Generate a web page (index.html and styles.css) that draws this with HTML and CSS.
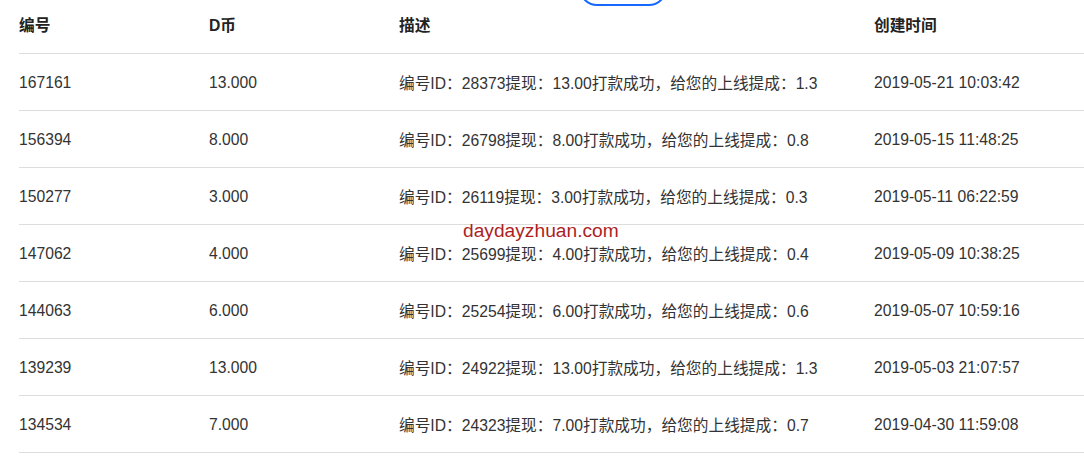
FILE: index.html
```html
<!DOCTYPE html>
<html lang="zh-CN">
<head>
    <meta charset="UTF-8">
    <title>D币记录</title>
    <link rel="stylesheet" href="styles.css">
</head>
<body>
    <div class="tab-pill"></div>
    <div class="watermark">daydayzhuan.com</div>
    <div class="record-wrap">
        <table class="record-table">
            <thead>
                <tr>
                    <th class="col-id">编号</th>
                    <th class="col-coin">D币</th>
                    <th class="col-desc">描述</th>
                    <th class="col-time">创建时间</th>
                </tr>
            </thead>
            <tbody>
                <tr><td>167161</td><td>13.000</td><td>编号ID：28373提现：13.00打款成功，给您的上线提成：1.3</td><td>2019-05-21 10:03:42</td></tr>
                <tr><td>156394</td><td>8.000</td><td>编号ID：26798提现：8.00打款成功，给您的上线提成：0.8</td><td>2019-05-15 11:48:25</td></tr>
                <tr><td>150277</td><td>3.000</td><td>编号ID：26119提现：3.00打款成功，给您的上线提成：0.3</td><td>2019-05-11 06:22:59</td></tr>
                <tr><td>147062</td><td>4.000</td><td>编号ID：25699提现：4.00打款成功，给您的上线提成：0.4</td><td>2019-05-09 10:38:25</td></tr>
                <tr><td>144063</td><td>6.000</td><td>编号ID：25254提现：6.00打款成功，给您的上线提成：0.6</td><td>2019-05-07 10:59:16</td></tr>
                <tr><td>139239</td><td>13.000</td><td>编号ID：24922提现：13.00打款成功，给您的上线提成：1.3</td><td>2019-05-03 21:07:57</td></tr>
                <tr><td>134534</td><td>7.000</td><td>编号ID：24323提现：7.00打款成功，给您的上线提成：0.7</td><td>2019-04-30 11:59:08</td></tr>
            </tbody>
        </table>
    </div>
</body>
</html>
```

FILE: styles.css
```css
body {
    font-family: "Liberation Sans", "Noto Sans CJK SC", sans-serif;
    font-size: 15.7px;
    color: #333;
    background: #fff;
    margin: 0;
    padding: 0;
    overflow: hidden;
}
.record-wrap {
    padding-left: 19px;
}
.record-table {
    width: 1100px;
    border-collapse: collapse;
    table-layout: fixed;
}
.record-table th,
.record-table td {
    text-align: left;
    padding: 0;
    border-bottom: 1px solid #ddd;
    white-space: nowrap;
}
.record-table th {
    height: 49px;
    padding-bottom: 4px;
    font-weight: bold;
    color: #222;
}
.record-table td {
    height: 55px;
    padding-top: 1px;
}
.col-id { width: 190px; }
.col-coin { width: 190px; }
.col-desc { width: 475px; }
.tab-pill {
    position: absolute;
    top: -30px;
    left: 579px;
    width: 84px;
    height: 32px;
    border: 2px solid #1668ff;
    border-radius: 18px;
}
.watermark {
    position: absolute;
    top: 220px;
    left: 463px;
    font-family: "Liberation Sans", sans-serif;
    font-size: 19.2px;
    line-height: 22px;
    color: #ad1f1f;
}
```
